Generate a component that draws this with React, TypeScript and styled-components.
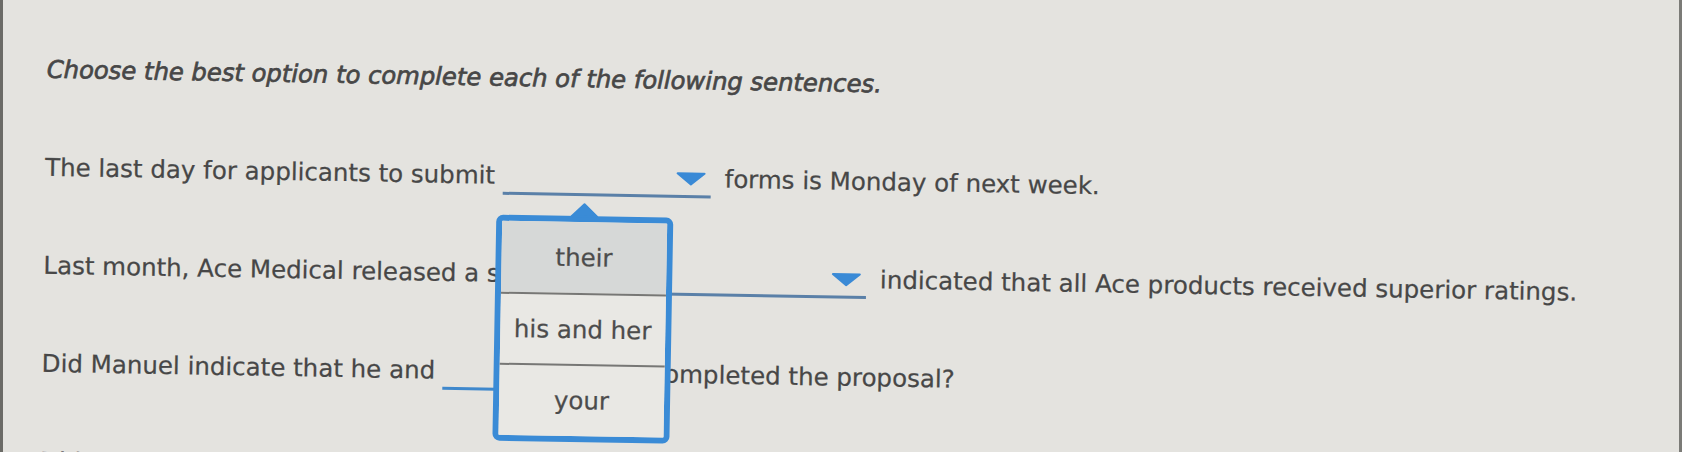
import React from "react";
import styled, { createGlobalStyle } from "styled-components";

const Global = createGlobalStyle`
  html, body {
    margin: 0;
    padding: 0;
    background: #e4e3df;
  }
`;

const Frame = styled.div`
  width: 1682px;
  height: 452px;
  box-sizing: border-box;
  border-left: 3px solid #6b6b67;
  border-right: 3px solid #7b7b77;
  background: #e4e3df;
  overflow: hidden;
  position: relative;
`;

const Sheet = styled.div`
  transform: rotate(1deg);
  transform-origin: 0 0;
  padding: 55px 0 0 45px;
  display: grid;
  grid-auto-rows: 98px;
  color: #474747;
  font-family: "DejaVu Sans", Verdana, sans-serif;
  font-size: 24.5px;
  line-height: 28px;
  -webkit-text-stroke: 0.25px #474747;
`;

const Heading = styled.div`
  font-style: italic;
  font-size: 24.25px;
  white-space: nowrap;
  -webkit-text-stroke: 0.7px #474747;
`;

const Sentence = styled.div`
  white-space: nowrap;
`;

const BlankBox = styled.span<{ $w: number; $tone: string }>`
  display: inline-block;
  position: relative;
  width: ${(p) => p.$w}px;
  height: 22px;
  border-bottom: 3px solid ${(p) => p.$tone};
  vertical-align: -11px;
  margin: 0 6px 0 0;
`;

const Arrow = styled.svg`
  position: absolute;
  right: 5px;
  bottom: 9px;
  width: 30px;
  height: 14px;
`;

const Popup = styled.div`
  position: absolute;
  z-index: 10;
  top: 45px;
  left: -6px;
  width: 177px;
  height: 226px;
  box-sizing: border-box;
  border: 6px solid #3a8bd6;
  border-radius: 7px;
  background: #e9e8e4;
  display: grid;
  grid-template-rows: 71px 71px 1fr;
  -webkit-text-stroke: 0.25px #4c4c4c;
`;

const Caret = styled.svg`
  position: absolute;
  top: -20px;
  left: 50%;
  margin-left: -14px;
  width: 28px;
  height: 15px;
`;

const Option = styled.div<{ $active?: boolean }>`
  display: flex;
  align-items: center;
  justify-content: center;
  background: ${(p) => (p.$active ? "#d6d8d7" : "#e9e8e4")};
  color: #4c4c4c;
  & + & {
    border-top: 2px solid #777775;
  }
`;

const BLUE = "#3a8ad6";

function Blank({
  width,
  tone = "#4f80b3",
  children,
}: {
  width: number;
  tone?: string;
  children?: React.ReactNode;
}) {
  return (
    <BlankBox $w={width} $tone={tone}>
      <Arrow viewBox="0 0 30 14">
        <polygon
          points="1.5,1.5 28.5,1.5 15,12.5"
          fill={BLUE}
          stroke={BLUE}
          strokeWidth="2"
          strokeLinejoin="round"
        />
      </Arrow>
      {children}
    </BlankBox>
  );
}

const options = ["their", "his and her", "your"];

export default function App() {
  return (
    <>
      <Global />
      <Frame>
        <Sheet>
          <Heading>Choose the best option to complete each of the following sentences.</Heading>
          <Sentence>
            The last day for applicants to submit{" "}
            <Blank width={208} tone="#5a80a8">
              <Popup>
                <Caret viewBox="0 0 28 15">
                  <polygon
                    points="1,14.5 14,2 27,14.5"
                    fill="#3a8bd6"
                    stroke="#3a8bd6"
                    strokeWidth="2"
                    strokeLinejoin="round"
                  />
                </Caret>
                {options.map((o, i) => (
                  <Option key={o} $active={i === 0}>
                    {o}
                  </Option>
                ))}
              </Popup>
            </Blank>{" "}
            forms is Monday of next week.
          </Sentence>
          <Sentence>
            Last month, Ace Medical released a survey{" "}
            <Blank width={289} tone="#5a80a8" /> indicated that all Ace products received superior
            ratings.
          </Sentence>
          <Sentence>
            Did Manuel indicate that he and <Blank width={194} tone="#3f88cc" /> completed the
            proposal?
          </Sentence>
          <Sentence>
            Did Dr. Lee ask everyone to submit <Blank width={208} /> reports by Friday?
          </Sentence>
        </Sheet>
      </Frame>
    </>
  );
}
